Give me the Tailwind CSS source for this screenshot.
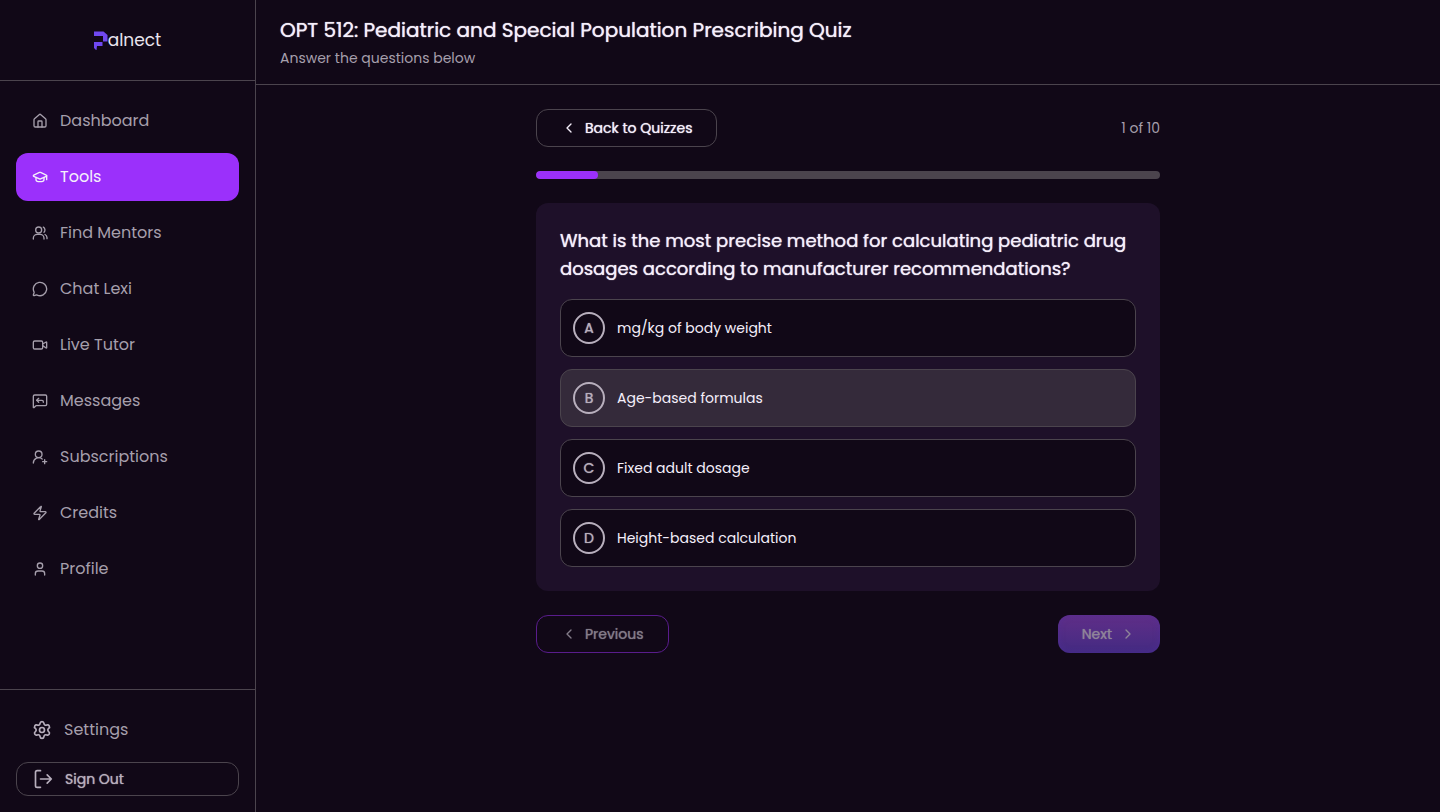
<!DOCTYPE html>
<html lang="en">
<head>
<meta charset="utf-8">
<meta name="viewport" content="width=device-width, initial-scale=1">
<title>Palnect - Quiz</title>
<script src="https://cdn.jsdelivr.net/npm/@tailwindcss/browser@4"></script>
</head>
<body class="flex min-h-screen bg-[#110817] font-[Poppins,Inter,sans-serif] text-[#f5effb]">
<aside class="flex w-64 shrink-0 flex-col border-r border-[#4b444d] text-[#a69fac]">
  <div class="flex h-[81px] items-center justify-center border-b border-[#4b444d] pt-0.5">
    <a href="#" aria-label="Palnect" class="flex items-center text-[#e9e4ee]">
      <svg class="h-5 w-[14px]" viewBox="0 0 14 20" fill="#7048f0"><path d="M0 .5h9.500L13.500 4v6.500H9V5H0zM0 11h8.500v4H3l-.5 4H2L0 17z"/></svg>
      <span class="text-[17px]">alnect</span>
    </a>
  </div>
  <nav class="flex flex-1 flex-col gap-2 p-4 text-base">
    <a href="#" class="flex h-12 items-center gap-3 rounded-xl px-4"><svg class="size-4" viewBox="0 0 24 24" fill="none" stroke="currentColor" stroke-width="2" stroke-linecap="round" stroke-linejoin="round"><path d="M15 21v-8a1 1 0 0 0-1-1h-4a1 1 0 0 0-1 1v8"/><path d="M3 10a2 2 0 0 1 .709-1.528l7-5.999a2 2 0 0 1 2.582 0l7 5.999A2 2 0 0 1 21 10v9a2 2 0 0 1-2 2H5a2 2 0 0 1-2-2z"/></svg>Dashboard</a>
    <a href="#" aria-current="page" class="flex h-12 items-center gap-3 rounded-xl bg-[#9b30fb] px-4 text-[#f5effb]"><svg class="size-4" viewBox="0 0 24 24" fill="none" stroke="currentColor" stroke-width="2" stroke-linecap="round" stroke-linejoin="round"><path d="M21.420 10.922a1 1 0 0 0-.019-1.838L12.830 5.180a2 2 0 0 0-1.660 0L2.600 9.080a1 1 0 0 0 0 1.832l8.570 3.908a2 2 0 0 0 1.660 0z"/><path d="M22 10v6"/><path d="M6 12.500V16a6 3 0 0 0 12 0v-3.500"/></svg>Tools</a>
    <a href="#" class="flex h-12 items-center gap-3 rounded-xl px-4"><svg class="size-4" viewBox="0 0 24 24" fill="none" stroke="currentColor" stroke-width="2" stroke-linecap="round" stroke-linejoin="round"><path d="M18 21v-1a6 6 0 0 0-6-6H8a6 6 0 0 0-6 6v1"/><circle cx="10" cy="7.500" r="4.500"/><path d="M17 3.200a5 5 0 0 1 1 7.800"/><path d="M22.500 20.500V19a6 6 0 0 0-3-4.800"/></svg>Find Mentors</a>
    <a href="#" class="flex h-12 items-center gap-3 rounded-xl px-4"><svg class="size-4" viewBox="0 0 24 24" fill="none" stroke="currentColor" stroke-width="2" stroke-linecap="round" stroke-linejoin="round"><path d="M2.992 16.342a2 2 0 0 1 .094 1.167l-1.065 3.290a1 1 0 0 0 1.236 1.168l3.413-.998a2 2 0 0 1 1.099.092 10 10 0 1 0-4.777-4.719"/></svg>Chat Lexi</a>
    <a href="#" class="flex h-12 items-center gap-3 rounded-xl px-4"><svg class="size-4" viewBox="0 0 24 24" fill="none" stroke="currentColor" stroke-width="2" stroke-linecap="round" stroke-linejoin="round"><path d="m16 13 5.223 3.482a.5.5 0 0 0 .777-.416V7.870a.5.5 0 0 0-.752-.432L16 10.500"/><rect x="2" y="6" width="14" height="12" rx="2"/></svg>Live Tutor</a>
    <a href="#" class="flex h-12 items-center gap-3 rounded-xl px-4"><svg class="size-4" viewBox="0 0 24 24" fill="none" stroke="currentColor" stroke-width="2" stroke-linecap="round" stroke-linejoin="round"><path d="M22 17a2 2 0 0 1-2 2H6.828a2 2 0 0 0-1.414.586l-2.202 2.202A.7.7 0 0 1 2 21.286V5a2 2 0 0 1 2-2h16a2 2 0 0 1 2 2z"/><path d="m10 8-3 3 3 3"/><path d="M17 14v-1a2 2 0 0 0-2-2H7"/></svg>Messages</a>
    <a href="#" class="flex h-12 items-center gap-3 rounded-xl px-4"><svg class="size-4" viewBox="0 0 24 24" fill="none" stroke="currentColor" stroke-width="2" stroke-linecap="round" stroke-linejoin="round"><path d="M2 21a8 8 0 0 1 13.292-6"/><circle cx="10" cy="8" r="5"/><path d="M19 16v6M22 19h-6"/></svg>Subscriptions</a>
    <a href="#" class="flex h-12 items-center gap-3 rounded-xl px-4"><svg class="size-4" viewBox="0 0 24 24" fill="none" stroke="currentColor" stroke-width="2" stroke-linecap="round" stroke-linejoin="round"><path d="M4 14a1 1 0 0 1-.780-1.630l9.900-10.200a.5.5 0 0 1 .860.460l-1.920 6.020A1 1 0 0 0 13 10h7a1 1 0 0 1 .780 1.630l-9.900 10.200a.5.5 0 0 1-.860-.460l1.920-6.020A1 1 0 0 0 11 14z"/></svg>Credits</a>
    <a href="#" class="flex h-12 items-center gap-3 rounded-xl px-4"><svg class="size-4" viewBox="0 0 24 24" fill="none" stroke="currentColor" stroke-width="2" stroke-linecap="round" stroke-linejoin="round"><path d="M19 21v-2a4 4 0 0 0-4-4H9a4 4 0 0 0-4 4v2"/><circle cx="12" cy="7" r="4"/></svg>Profile</a>
  </nav>
  <div class="flex flex-col gap-2 border-t border-[#4b444d] p-4 text-[#b8afbd]">
    <a href="#" class="flex h-12 items-center gap-3 px-4 text-base text-[#a69fac]"><svg class="size-5 text-[#b8afbd]" viewBox="0 0 24 24" fill="none" stroke="currentColor" stroke-width="2" stroke-linecap="round" stroke-linejoin="round"><path d="M9.671 4.136a2.340 2.340 0 0 1 4.659 0 2.340 2.340 0 0 0 3.319 1.915 2.340 2.340 0 0 1 2.330 4.033 2.340 2.340 0 0 0 0 3.831 2.340 2.340 0 0 1-2.330 4.033 2.340 2.340 0 0 0-3.319 1.915 2.340 2.340 0 0 1-4.659 0 2.340 2.340 0 0 0-3.320-1.915 2.340 2.340 0 0 1-2.330-4.033 2.340 2.340 0 0 0 0-3.831A2.340 2.340 0 0 1 6.350 6.051a2.340 2.340 0 0 0 3.319-1.915"/><circle cx="12" cy="12" r="3"/></svg>Settings</a>
    <button class="flex h-[34px] items-center gap-3 rounded-xl border border-[#4b444d] px-4 text-sm text-shadow-[0_0_1px_currentColor]"><svg class="size-5" viewBox="0 0 24 24" fill="none" stroke="currentColor" stroke-width="2" stroke-linecap="round" stroke-linejoin="round"><path d="m17 17 5-5-5-5M22 12H9M9 22H5a2 2 0 0 1-2-2V4a2 2 0 0 1 2-2h4"/></svg>Sign Out</button>
  </div>
</aside>
<div class="flex min-w-0 flex-1 flex-col">
  <header class="flex flex-col gap-1 border-b border-[#4b444d] px-6 py-4">
    <h1 class="text-xl/7 text-shadow-[0_0_1px_currentColor]">OPT 512: Pediatric and Special Population Prescribing Quiz</h1>
    <p class="text-sm/5 text-[#a69fac]">Answer the questions below</p>
  </header>
  <main class="mx-auto flex w-full max-w-2xl flex-col gap-6 p-6">
    <div class="flex items-center justify-between">
      <button class="flex h-[38px] items-center gap-2 rounded-xl border border-[#4b444d] px-6 text-sm text-shadow-[0_0_1px_currentColor]"><svg class="size-4" viewBox="0 0 24 24" fill="none" stroke="currentColor" stroke-width="2" stroke-linecap="round" stroke-linejoin="round"><path d="m15 18-6-6 6-6"/></svg>Back to Quizzes</button>
      <span class="text-sm text-[#a69fac]">1 of 10</span>
    </div>
    <div role="progressbar" aria-label="Quiz progress" aria-valuenow="10" aria-valuemin="0" aria-valuemax="100" class="h-2 overflow-hidden rounded-full bg-[#4b444d]">
      <div class="h-full rounded-full bg-[#9b30fb]" style="width:10%"></div>
    </div>
    <section class="rounded-xl bg-[#1e1029] p-6">
      <h2 class="mb-4 text-lg/7 text-shadow-[0_0_1px_currentColor]">What is the most precise method for calculating pediatric drug dosages according to manufacturer recommendations?</h2>
      <div class="flex flex-col gap-3 text-sm">
        <button class="flex items-center gap-3 rounded-xl border border-[#4b444d] bg-[#110817] p-3 text-left"><span class="flex size-8 items-center justify-center rounded-full border-2 border-[#b8afbd] text-[#b8afbd] text-shadow-[0_0_1px_currentColor]">A</span>mg/kg of body weight</button>
        <button class="flex items-center gap-3 rounded-xl border border-[#4b444d] bg-[#342a3a] p-3 text-left"><span class="flex size-8 items-center justify-center rounded-full border-2 border-[#b8afbd] text-[#b8afbd] text-shadow-[0_0_1px_currentColor]">B</span>Age-based formulas</button>
        <button class="flex items-center gap-3 rounded-xl border border-[#4b444d] bg-[#110817] p-3 text-left"><span class="flex size-8 items-center justify-center rounded-full border-2 border-[#b8afbd] text-[#b8afbd] text-shadow-[0_0_1px_currentColor]">C</span>Fixed adult dosage</button>
        <button class="flex items-center gap-3 rounded-xl border border-[#4b444d] bg-[#110817] p-3 text-left"><span class="flex size-8 items-center justify-center rounded-full border-2 border-[#b8afbd] text-[#b8afbd] text-shadow-[0_0_1px_currentColor]">D</span>Height-based calculation</button>
      </div>
    </section>
    <div class="flex items-center justify-between text-sm">
      <button disabled class="flex h-[38px] items-center gap-2 rounded-xl border border-[#591c8c] px-6 text-[#837c89] text-shadow-[0_0_1px_currentColor]"><svg class="size-4" viewBox="0 0 24 24" fill="none" stroke="currentColor" stroke-width="2" stroke-linecap="round" stroke-linejoin="round"><path d="m15 18-6-6 6-6"/></svg>Previous</button>
      <button disabled class="flex h-[38px] items-center gap-2 rounded-xl bg-linear-to-b from-[#602e88] to-[#432a82] px-6 text-[#8f8499] inset-shadow-[0_0_6px_#5030a080] text-shadow-[0_0_1px_currentColor]">Next<svg class="size-4" viewBox="0 0 24 24" fill="none" stroke="currentColor" stroke-width="2" stroke-linecap="round" stroke-linejoin="round"><path d="m9 18 6-6-6-6"/></svg></button>
    </div>
  </main>
</div>
</body>
</html>
